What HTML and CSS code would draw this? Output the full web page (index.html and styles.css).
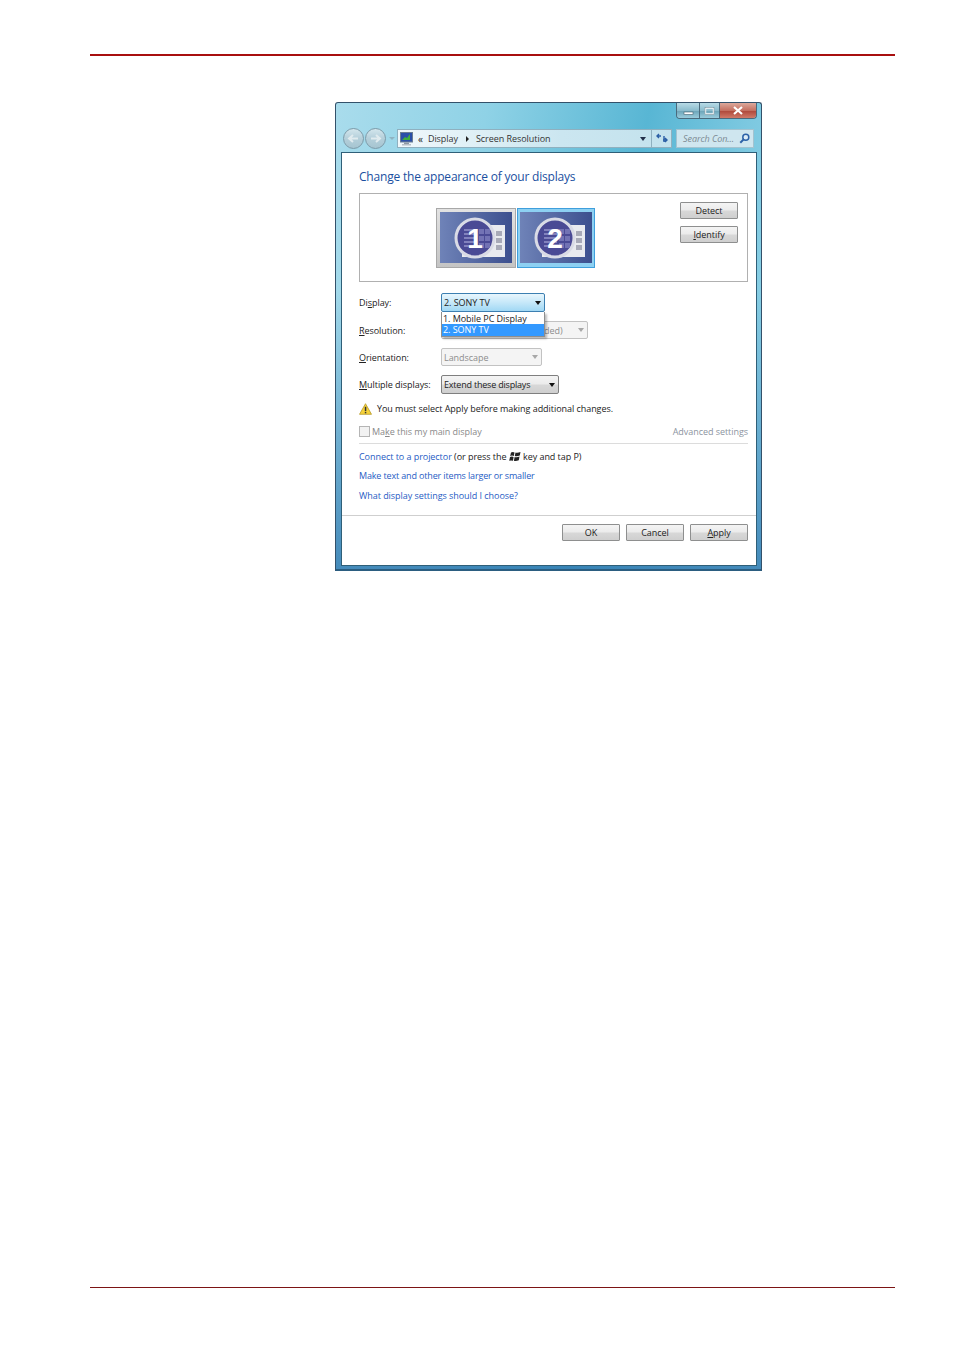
FILE: index.html
```html
<!DOCTYPE html>
<html lang="en">
<head>
  <meta charset="UTF-8">
  <meta name="viewport" content="width=device-width, initial-scale=1.0">
  <title>Screen Resolution</title>
  <link rel="stylesheet" href="styles.css">
</head>
<body>
  <div class="page">
    <div class="rule-top"></div>

    <div class="window">
      <div class="caption-btns">
        <span class="cap cap-min"><svg width="11" height="8" viewBox="0 0 11 8"><rect x="1" y="5" width="9" height="2.500" fill="#fff" stroke="#43606f" stroke-width=".6"/></svg></span>
        <span class="cap cap-max"><svg width="11" height="8" viewBox="0 0 11 8"><rect x="1.500" y="1" width="8" height="6" fill="none" stroke="#fff" stroke-width="1.400"/><rect x="1" y=".5" width="9" height="7" fill="none" stroke="#43606f" stroke-width=".4"/></svg></span>
        <span class="cap cap-close"><svg width="12" height="9" viewBox="0 0 12 9"><path d="M2 1l8 7M10 1l-8 7" stroke="#fff" stroke-width="2.200"/></svg></span>
      </div>

      <div class="nav">
        <div class="nav-arrows">
          <span class="round"><svg width="19" height="19" viewBox="0 0 19 19"><path d="M14 9.500H6M9 6L5 9.500 9 13" fill="none" stroke="#e0ebef" stroke-width="2"/></svg></span>
          <span class="round"><svg width="19" height="19" viewBox="0 0 19 19"><path d="M5 9.500h8M10 6l4 3.500L10 13" fill="none" stroke="#e0ebef" stroke-width="2"/></svg></span>
          <span class="nav-drop"></span>
        </div>
        <div class="address">
          <svg class="addr-icon" width="13" height="14" viewBox="0 0 13 14"><rect x=".5" y=".5" width="12" height="9.500" fill="#2a4fa8" stroke="#6b7d92"/><path d="M2 8l3-3 2 1 3-4v6z" fill="#3fae3c"/><rect x="4" y="10.500" width="5" height="1.500" fill="#8d98a3"/><rect x="2" y="12" width="9" height="1.500" fill="#b6bec6"/></svg>
          <span class="crumb-more">&laquo;</span>
          <span class="crumb">Display</span>
          <span class="crumb-sep"></span>
          <span class="crumb">Screen Resolution</span>
          <span class="addr-drop"></span>
          <span class="addr-refresh"><svg width="12" height="11" viewBox="0 0 12 11"><path d="M5 3H1M3 1L1 3l2 2" fill="none" stroke="#2b5fa6" stroke-width="1.400"/><path d="M7 7h4M9 5l2 2-2 2M8 3v6" fill="none" stroke="#2b5fa6" stroke-width="1.400"/></svg></span>
        </div>
        <div class="search">
          <span>Search Con...</span>
          <svg width="11" height="11" viewBox="0 0 11 11"><circle cx="6.800" cy="4.200" r="3" fill="#dcecf7" stroke="#2d62a8" stroke-width="1.500"/><path d="M4.600 6.400L1.300 9.700" stroke="#2d62a8" stroke-width="2"/></svg>
        </div>
      </div>

      <div class="panel">
        <div class="panel-body">
          <h1 class="heading">Change the appearance of your displays</h1>

          <div class="monitors">
            <div class="monitor-pair">
              <div class="monitor monitor-grey">
                <svg width="72" height="51" viewBox="0 0 72 51">
                  <defs><linearGradient id="screen"><stop offset="0" stop-color="#6f83b8"/><stop offset="1" stop-color="#3c4f8e"/></linearGradient></defs>
                  <rect width="72" height="51" fill="url(#screen)"/>
                  <rect x="22" y="13" width="43" height="32" fill="#e9ebef"/>
                  <circle cx="35" cy="26" r="19" fill="#4a4a95" stroke="#d9dbe6" stroke-width="3"/>
                  <path d="M24 17h13v2H24zM24 21h13v2H24zM24 25h13v2H24zM24 29h13v2H24zM24 33h13v2H24z" fill="#8282bd"/>
                  <path d="M39 17h5v5h-5zM45 17h5v5h-5zM39 24h5v5h-5zM45 24h5v5h-5zM39 31h5v5h-5zM45 31h5v5h-5z" fill="#7272b4"/>
                  <path d="M56 19h6v5h-6zM56 26h6v5h-6zM56 33h6v5h-6z" fill="#a8aab8"/>
                  <text x="35" y="36" class="mon-num">1</text>
                </svg>
              </div>
              <div class="monitor monitor-blue">
                <svg width="72" height="51" viewBox="0 0 72 51">
                  <rect width="72" height="51" fill="url(#screen)"/>
                  <rect x="22" y="13" width="43" height="32" fill="#e9ebef"/>
                  <circle cx="35" cy="26" r="19" fill="#4a4a95" stroke="#d9dbe6" stroke-width="3"/>
                  <path d="M24 17h13v2H24zM24 21h13v2H24zM24 25h13v2H24zM24 29h13v2H24zM24 33h13v2H24z" fill="#8282bd"/>
                  <path d="M39 17h5v5h-5zM45 17h5v5h-5zM39 24h5v5h-5zM45 24h5v5h-5zM39 31h5v5h-5zM45 31h5v5h-5z" fill="#7272b4"/>
                  <path d="M56 19h6v5h-6zM56 26h6v5h-6zM56 33h6v5h-6z" fill="#a8aab8"/>
                  <text x="35" y="36" class="mon-num">2</text>
                </svg>
              </div>
            </div>
            <div class="monitor-btns">
              <span class="btn">Detect</span>
              <span class="btn"><u>I</u>dentify</span>
            </div>
          </div>

          <div class="form">
            <div class="form-row row-display">
              <span class="label">Di<u>s</u>play:</span>
              <span class="select select-open w-display">2. SONY TV<i class="arrow"></i></span>
            </div>
            <div class="form-row row-res">
              <span class="label"><u>R</u>esolution:</span>
              <span class="select select-off w-res"><span class="res-text">ded)</span><i class="arrow arrow-off"></i></span>
            </div>
            <div class="form-row row-orient">
              <span class="label"><u>O</u>rientation:</span>
              <span class="select select-off w-orient">Landscape<i class="arrow arrow-off"></i></span>
            </div>
            <div class="form-row row-multi">
              <span class="label"><u>M</u>ultiple displays:</span>
              <span class="select w-multi">Extend these displays<i class="arrow"></i></span>
            </div>
            <div class="dropdown">
              <div class="opt">1. Mobile PC Display</div>
              <div class="opt opt-on">2. SONY TV</div>
            </div>
          </div>

          <div class="warning">
            <svg width="13" height="12" viewBox="0 0 13 12"><path d="M6.500 .7L12.500 11.300H.5z" fill="#f6d23a" stroke="#b89a2a" stroke-width=".8"/><rect x="5.800" y="3.800" width="1.500" height="4.200" fill="#333"/><rect x="5.800" y="8.800" width="1.500" height="1.500" fill="#333"/></svg>
            <span>You must select Apply before making additional changes.</span>
          </div>

          <div class="main-row">
            <label class="check"><span class="checkbox"></span>Ma<u>k</u>e this my main display</label>
            <span class="advanced">Advanced settings</span>
          </div>

          <div class="links">
            <p><a class="link">Connect to a projector</a> (or press the <svg class="win-key" width="13" height="11" viewBox="0 0 13 11"><path d="M3 1.500Q5 .5 6.500 1.500L5.800 5Q4 4.200 2.200 5zM7.500 1.500Q9.500 2.300 12.500 1L11.800 4.600Q9 5.600 6.800 5zM2 6Q4 5.200 5.600 6L5 9.800Q3 9 1.200 9.800zM6.600 6Q9 6.600 11.500 5.600L10.800 9.300Q8 10.500 5.900 9.800z" fill="#222"/></svg> key and tap P)</p>
            <p class="tight"><a class="link">Make text and other items larger or smaller</a></p>
            <p><a class="link">What display settings should I choose?</a></p>
          </div>
        </div>

        <div class="footer">
          <span class="btn">OK</span>
          <span class="btn">Cancel</span>
          <span class="btn"><u>A</u>pply</span>
        </div>
      </div>
    </div>

    <div class="rule-bottom"></div>
  </div>
</body>
</html>
```

FILE: styles.css
```css
body {
  margin: 0;
  background: #fff;
  font-family: "Open Sans", "Noto Sans", sans-serif;
  font-size: 9px;
  letter-spacing: -0.05px;
  color: #222;
}
.page {
  height: 1351px;
  padding: 54px 59px 0 90px;
  box-sizing: border-box;
  overflow: hidden;
}
.rule-top {
  height: 2px;
  background: #a80f0f;
}
.rule-bottom {
  height: 1px;
  background: #7c1414;
  margin-top: 716px;
}

/* window frame */
.window {
  position: relative;
  box-sizing: border-box;
  width: 427px;
  height: 469px;
  margin: 46px 0 0 245px;
  padding: 24px 4px 3px 5px;
  border: 1px solid #33516a;
  border-bottom: 2px solid #2b5d80;
  border-radius: 3px 3px 0 0;
  background:
    linear-gradient(rgba(58, 143, 192, 0) 40%, rgba(48, 120, 175, 0.8) 100%),
    linear-gradient(100deg, #a9dcec 0%, #8fd2e6 30%, #58b6d4 62%, #7cc8e0 82%, #93d5e9 100%);
}
.caption-btns {
  position: absolute;
  top: 0;
  right: 4px;
  display: flex;
  height: 15px;
  border: 1px solid #4a6a7c;
  border-top: 0;
  border-radius: 0 0 4px 4px;
  overflow: hidden;
}
.cap {
  display: flex;
  align-items: center;
  justify-content: center;
  height: 15px;
}
.cap-min, .cap-max {
  width: 22px;
  background: linear-gradient(#b8dbe6, #8bbccd 50%, #6ea6ba 55%, #9accdc);
  border-right: 1px solid #4a6a7c;
}
.cap-max {
  width: 19px;
}
.cap-close {
  width: 36px;
  background: linear-gradient(#dca99c, #c46f60 50%, #b04a3c 55%, #d07a68);
}

/* back/forward, address, search */
.nav {
  display: flex;
  align-items: center;
  height: 23px;
}
.nav-arrows {
  display: flex;
  align-items: center;
  width: 54px;
  margin-left: 2px;
  gap: 1px;
}
.round {
  display: flex;
  width: 21px;
  height: 21px;
  border: 1px solid #7d9aa8;
  border-radius: 50%;
  box-sizing: border-box;
  background: linear-gradient(#d3e6ed, #b4cfda 50%, #a6c5d1);
  align-items: center;
  justify-content: center;
  flex: none;
}
.round svg {
  flex: none;
}
.nav-drop {
  margin-left: 2px;
  border-left: 3px solid transparent;
  border-right: 3px solid transparent;
  border-top: 3px solid #8fb3c2;
}
.address {
  display: flex;
  align-items: center;
  width: 275px;
  height: 19px;
  box-sizing: border-box;
  border: 1px solid #8fb0bf;
  background: linear-gradient(90deg, #f0f8fb, #cbe6f0 60%, #c3e2ed);
  color: #333;
  padding-left: 2px;
}
.addr-icon {
  flex: none;
  margin-right: 5px;
}
.crumb-more {
  font-size: 10px;
  margin-right: 5px;
  color: #222;
}
.crumb-sep {
  margin: 0 7px 0 8px;
  border-top: 3px solid transparent;
  border-bottom: 3px solid transparent;
  border-left: 3px solid #222;
}
.addr-drop {
  margin-left: auto;
  margin-right: 5px;
  border-left: 3px solid transparent;
  border-right: 3px solid transparent;
  border-top: 4px solid #23304a;
}
.addr-refresh {
  display: flex;
  align-items: center;
  justify-content: center;
  width: 19px;
  height: 17px;
  border-left: 1px solid #8fb0bf;
}
.search {
  display: flex;
  align-items: center;
  justify-content: space-between;
  box-sizing: border-box;
  width: 78px;
  height: 19px;
  margin-left: 4px;
  padding: 0 3px 0 6px;
  border: 1px solid #a3c3d0;
  background: #cfe6ef;
  font-style: italic;
  color: #7c8a92;
}

/* white client area */
.panel {
  display: flex;
  flex-direction: column;
  height: 414px;
  margin-top: 2px;
  box-sizing: border-box;
  border: 1px solid #2f5f78;
  background: #fff;
}
.panel-body {
  flex: 1;
  padding: 0 8px 0 17px;
  position: relative;
}
.heading {
  margin: 15px 0 8px;
  font-size: 12px;
  letter-spacing: -0.2px;
  line-height: 17px;
  font-weight: 400;
  color: #1a4fa0;
}
.monitors {
  display: flex;
  height: 89px;
  box-sizing: border-box;
  border: 1px solid #b0b0b0;
}
.monitor-pair {
  display: flex;
  margin: 14px 0 0 76px;
  height: 60px;
}
.monitor {
  width: 80px;
  height: 60px;
  box-sizing: border-box;
  padding: 3px;
  border: 1px solid #a8a8a8;
  background: linear-gradient(#e2e2e2, #c4c4c4);
}
.monitor-blue {
  width: 78px;
  margin-left: 1px;
  padding: 3px 2px;
  border-color: #3f9fdc;
  background: #8dd0f2;
}
.monitor svg {
  display: block;
}
.mon-num {
  font-family: "Liberation Sans", sans-serif;
  font-size: 28px;
  font-weight: 700;
  fill: #fff;
  text-anchor: middle;
}
.monitor-btns {
  display: flex;
  flex-direction: column;
  gap: 7px;
  margin: 8px 0 0 85px;
}

.btn {
  display: flex;
  align-items: center;
  justify-content: center;
  box-sizing: border-box;
  width: 58px;
  height: 17px;
  border: 1px solid #8e8f8f;
  border-radius: 1px;
  background: linear-gradient(#f4f4f4, #ebebeb 48%, #d8d8d8 52%, #cfcfcf);
  color: #222;
}

/* combo rows */
.form {
  position: relative;
  margin-top: 11px;
}
.form-row {
  display: flex;
  align-items: center;
}
.row-display { height: 19px; }
.row-res { height: 18px; margin-top: 9px; }
.row-orient { height: 18px; margin-top: 9px; }
.row-multi { height: 19px; margin-top: 9px; }
.label {
  width: 82px;
  flex: none;
  color: #222;
}
.select {
  display: flex;
  align-items: center;
  justify-content: space-between;
  box-sizing: border-box;
  height: 100%;
  padding: 0 3px 0 2px;
  border: 1px solid #7f7f7f;
  border-radius: 2px;
  background: linear-gradient(#f4f4f4, #ebebeb 48%, #d8d8d8 52%, #cfcfcf);
  color: #222;
}
.select-open {
  border-color: #3c7fb1;
  background: linear-gradient(#e8f6fd, #c6e8f9 50%, #a1d8f4);
}
.select-off {
  border-color: #c2c2c2;
  background: #f4f4f4;
  color: #8d8d8d;
}
.w-display { width: 104px; }
.w-res { width: 147px; }
.w-orient { width: 101px; }
.w-multi {
  width: 118px;
  letter-spacing: -0.2px;
}
.res-text {
  margin-left: 100px;
}
.arrow {
  border-left: 3.500px solid transparent;
  border-right: 3.500px solid transparent;
  border-top: 4px solid #111;
}
.arrow-off {
  border-top-color: #a8a8a8;
  border-left-width: 3px;
  border-right-width: 3px;
}
.dropdown {
  position: absolute;
  top: 19px;
  left: 82px;
  width: 104px;
  box-sizing: border-box;
  height: 25px;
  padding-top: 1px;
  border: 1px solid #8e8e8e;
  border-top: 0;
  background: #fff;
  box-shadow: 2px 2px 2px rgba(0, 0, 0, 0.25);
}
.opt {
  height: 11px;
  line-height: 11px;
  padding-left: 1px;
  color: #222;
}
.opt-on {
  height: 12px;
  background: #3399ff;
  color: #fff;
}

.warning {
  display: flex;
  align-items: center;
  gap: 5px;
  margin-top: 8px;
  height: 13px;
  color: #222;
}
.main-row {
  display: flex;
  align-items: center;
  justify-content: space-between;
  box-sizing: border-box;
  height: 22px;
  margin-top: 7px;
  padding-bottom: 2px;
  border-bottom: 1px solid #dcdcdc;
  color: #8a8a8a;
}
.check {
  display: flex;
  align-items: center;
}
.checkbox {
  width: 11px;
  height: 11px;
  margin-right: 2px;
  box-sizing: border-box;
  border: 1px solid #b5b5b5;
  background: #f2f2f2;
}
.advanced {
  color: #8c94a0;
}
.links {
  margin-top: 6px;
}
.links p {
  display: flex;
  align-items: center;
  white-space: pre;
  margin: 0 0 6.500px;
  height: 13px;
  line-height: 13px;
}
.links .tight {
  letter-spacing: -0.15px;
  margin-top: -0.5px;
  margin-bottom: 7px;
}
.link {
  color: #1f5cc4;
}
.win-key {
  margin: 0 0 0 -1px;
}
.footer {
  display: flex;
  justify-content: flex-end;
  gap: 6px;
  height: 50px;
  box-sizing: border-box;
  padding: 8px 8px 0 0;
  border-top: 1px solid #cfcfcf;
}
```
